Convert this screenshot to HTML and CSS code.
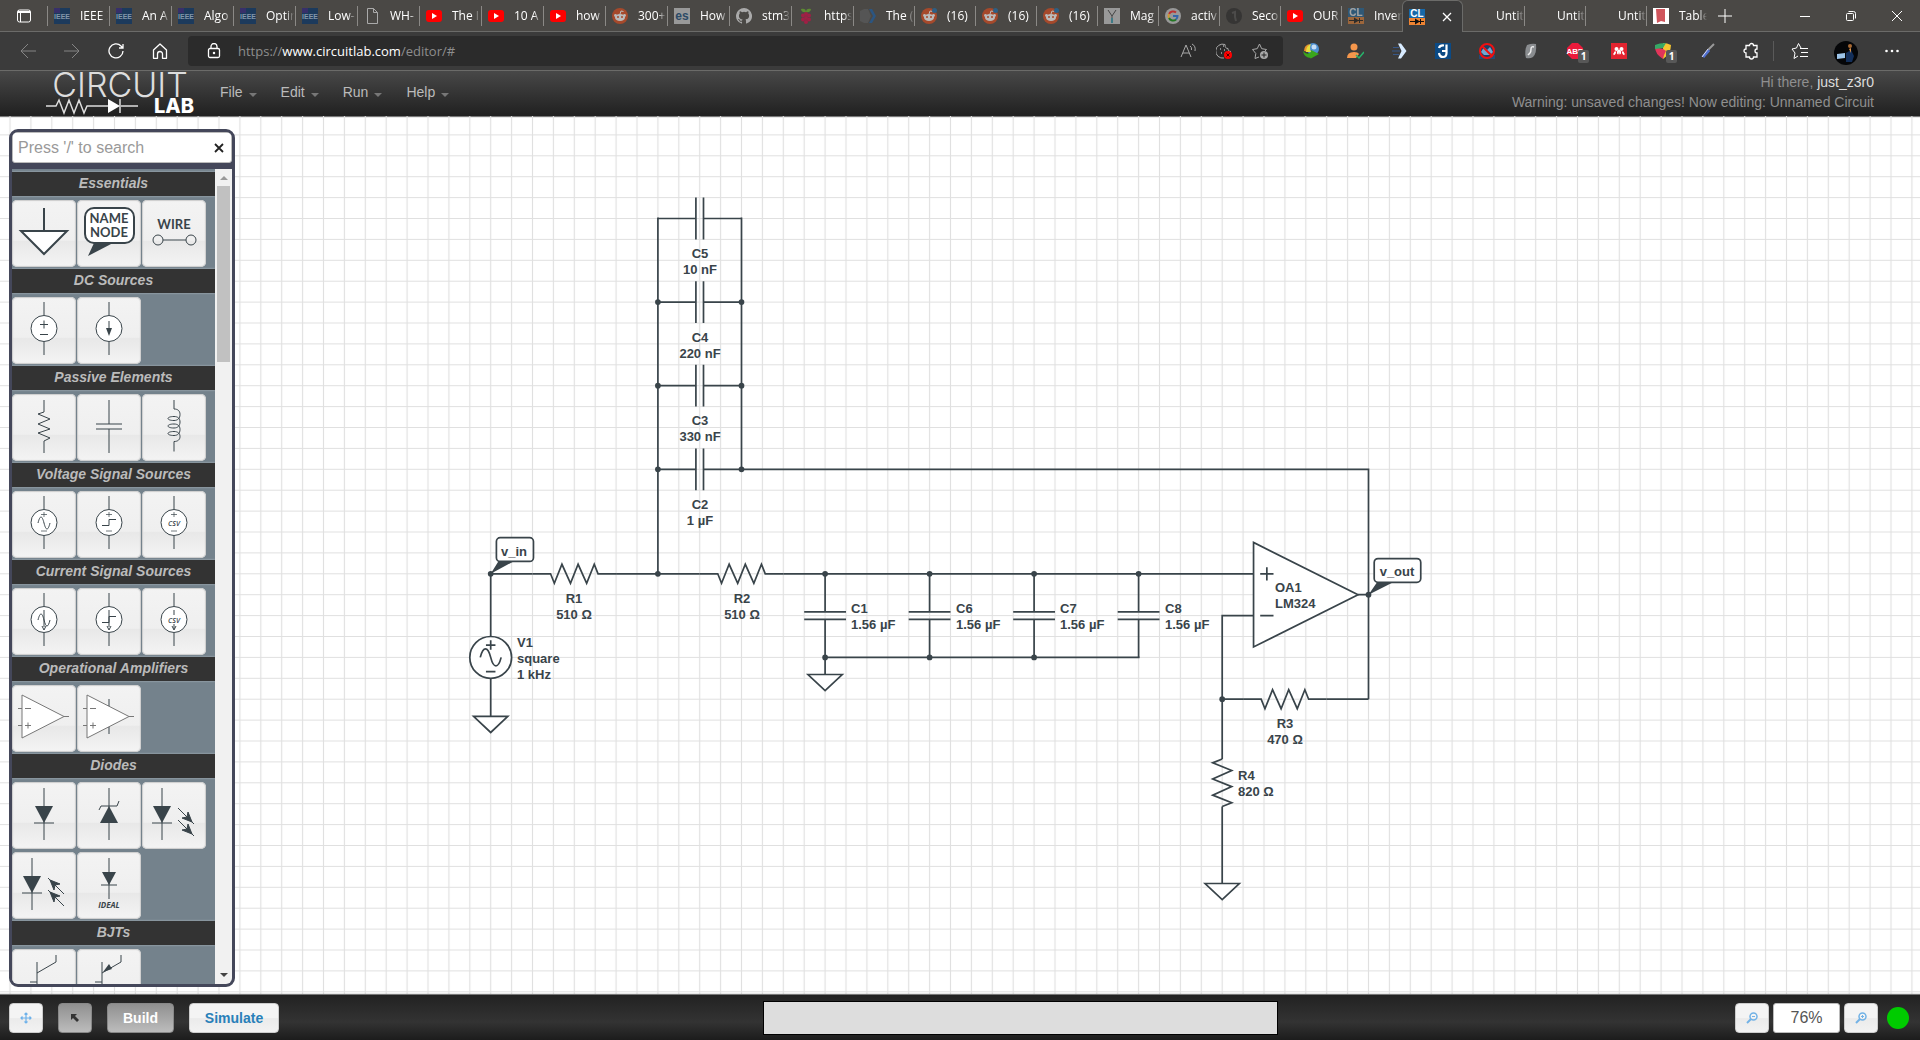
FILE: index.html
```html
<!DOCTYPE html>
<html lang="en">
<head>
<meta charset="utf-8">
<title>CircuitLab Editor</title>
<link rel="stylesheet" href="styles.css">
</head>
<body>
<svg class="defs" aria-hidden="true">
  <defs>
    <symbol id="f-ieee" viewBox="0 0 16 16"><path fill="#1c3a5c" d="M0 0h16v16H0z"/><path fill="#37306a" d="M0 0h6v5H0z"/><text x="8" y="11" class="fav-ieee">IEEE</text></symbol>
    <symbol id="f-page" viewBox="0 0 16 16"><path d="M3.500.5h6l4 4v11h-10zM9.500.5v4h4" fill="none" stroke="#aaa"/></symbol>
    <symbol id="f-yt" viewBox="0 0 16 16"><rect y="2" width="16" height="12" rx="3" fill="#f00"/><path d="M6 5l5 3-5 3z" fill="#fff"/></symbol>
    <symbol id="f-reddit" viewBox="0 0 16 16"><circle cx="8" cy="8" r="8" fill="#a6492b"/><ellipse cx="8" cy="9.500" rx="5" ry="3.600" fill="#bbb"/><circle cx="3.500" cy="7.500" r="1.400" fill="#bbb"/><circle cx="12.500" cy="7.500" r="1.400" fill="#bbb"/><path d="M8 6l1-3 2.500.5" stroke="#bbb" fill="none"/><circle cx="6" cy="9" r="1" fill="#a6492b"/><circle cx="10" cy="9" r="1" fill="#a6492b"/></symbol>
    <symbol id="f-reddit-n" viewBox="0 0 16 16"><use href="#f-reddit"/><circle cx="13.500" cy="2.500" r="2.500" fill="#2d5f85"/></symbol>
    <symbol id="f-es" viewBox="0 0 16 16"><path fill="#999" d="M0 0h16v16H0z"/><text x="8" y="12" class="fav-es">es</text></symbol>
    <symbol id="f-gh" viewBox="0 0 16 16"><path fill="#aaa" fill-rule="evenodd" d="M8 0a8 8 0 0 0-2.530 15.590c.4.070.55-.17.55-.38v-1.490c-2.010.37-2.530-.49-2.690-.94-.09-.23-.48-.94-.82-1.130-.28-.15-.68-.52-.01-.53.63-.01 1.080.58 1.230.82.72 1.210 1.870.87 2.330.66.07-.52.28-.87.51-1.070-1.780-.2-3.640-.89-3.640-3.950 0-.87.31-1.590.82-2.150-.08-.2-.36-1.020.08-2.120 0 0 .67-.21 2.200.82a7.500 7.500 0 0 1 4 0c1.530-1.040 2.200-.82 2.200-.82.44 1.100.16 1.920.08 2.120.51.56.82 1.270.82 2.150 0 3.070-1.870 3.750-3.650 3.950.29.25.54.73.54 1.480v2.200c0 .21.15.46.55.38A8 8 0 0 0 8 0z"/></symbol>
    <symbol id="f-pi" viewBox="0 0 16 16"><path d="M3 1c3-1 5 0 5 3-3 1-5-1-5-3zM13 1c-3-1-5 0-5 3 3 1 5-1 5-3z" fill="#5d8a33"/><g fill="#a01f45"><circle cx="8" cy="6" r="2"/><circle cx="5" cy="7.500" r="2"/><circle cx="11" cy="7.500" r="2"/><circle cx="8" cy="10" r="2"/><circle cx="5" cy="11.500" r="2"/><circle cx="11" cy="11.500" r="2"/><circle cx="8" cy="14" r="2"/></g></symbol>
    <symbol id="f-hex" viewBox="0 0 16 16"><path d="M0 3l4-2h4l3 7-3 7H4l-4-2z" fill="#555"/><path d="M9 1h3l4 7-4 7H9l4-7z" fill="#2c5580"/></symbol>
    <symbol id="f-y" viewBox="0 0 16 16"><path fill="#999" d="M0 0h16v16H0z"/><path d="M4 2l4 6 4-6M8 8v2" stroke="#444" fill="none"/><path d="M8 10v5" stroke="#3e7a86" stroke-width="2"/></symbol>
    <symbol id="f-g" viewBox="0 0 16 16"><circle cx="8" cy="8" r="8" fill="#999"/><g fill="none" stroke-width="2"><path d="M4 6a4.500 4.500 0 0 1 7-1.500" stroke="#b33"/><path d="M4 6a4.500 4.500 0 0 0 0 4" stroke="#c93"/><path d="M4 10a4.500 4.500 0 0 0 7 1.500" stroke="#272"/><path d="M11 11.500c1-.8 1.500-2 1.500-3.500H8" stroke="#36a"/></g></symbol>
    <symbol id="f-dark" viewBox="0 0 16 16"><circle cx="8" cy="8" r="8" fill="#363534"/><path d="M6 5l3-1v5l1 4" stroke="#4c4b4a" fill="none" stroke-width="2"/></symbol>
    <symbol id="f-cl" viewBox="0 0 16 16"><path fill="#1668a8" d="M0 0h16v9H0z"/><path fill="#ef8432" d="M0 9h16v7H0z"/><text x="8" y="8" class="fav-cl">CL</text><path d="M1 12.500h14M11.500 10v5" stroke="#111"/><path d="M6 9.500l5 3-5 3z" fill="#111"/></symbol>
    <symbol id="f-table" viewBox="0 0 16 16"><path fill="#fff" d="M0 0h16v16H0z"/><path d="M3 1h9v13l-4-1-4 2z" fill="#d0555c"/></symbol>

    <pattern id="grid" width="22" height="22" x="-11" y="-11" patternUnits="userSpaceOnUse"><path d="M11 0v22M0 11h22" stroke="#e0e0e0" stroke-width="1.200"/></pattern>
    <g id="res"><path d="M-44 0h19l4 10 8-20 9 20 8-20 9 20 8-20 4 10h19"/></g>
    <g id="cap"><path d="M-44 0h40M-4-22v44M4-22v44M4 0h40"/></g>
    <g id="gnd"><path d="M-18 0h36L0 17z" fill="#fff"/></g>
    <g id="src"><path d="M32 5v13M32 45v13"/><circle cx="32" cy="31.500" r="13" fill="#fff"/></g>
    <g id="pol"><path d="M29 23.500h6M32 21v5M29 40h6" opacity=".7"/></g>
    <g id="diode"><path d="M0 6v52M-10 41h20"/><path d="M-9 24H9L0 41z" fill="#39444a" stroke="none"/></g>
    <g id="ray"><path d="M0 0l16 16"/><path d="M14 14L4 10l5-1 1-5z" fill="#39444a"/></g>
  </defs>
</svg>

<nav class="tabs" aria-label="Tabs">
  <button class="tab-menu" aria-label="Tab actions"><svg width="14" height="14" viewBox="0 0 14 14"><rect x=".5" y="1" width="13" height="12" rx="2" fill="none" stroke="#fff"/><path d="M1 2h12v2H1z" fill="#fff"/><path d="M3.500 4v9" stroke="#fff"/></svg></button>
  <div class="tab-list">
    <button class="tab"><svg><use href="#f-ieee"/></svg><span>IEEE X</span></button>
    <button class="tab"><svg><use href="#f-ieee"/></svg><span>An A</span></button>
    <button class="tab"><svg><use href="#f-ieee"/></svg><span>Algo</span></button>
    <button class="tab"><svg><use href="#f-ieee"/></svg><span>Optir</span></button>
    <button class="tab"><svg><use href="#f-ieee"/></svg><span>Low-</span></button>
    <button class="tab"><svg><use href="#f-page"/></svg><span>WH-</span></button>
    <button class="tab"><svg><use href="#f-yt"/></svg><span>The I</span></button>
    <button class="tab"><svg><use href="#f-yt"/></svg><span>10 A</span></button>
    <button class="tab"><svg><use href="#f-yt"/></svg><span>how</span></button>
    <button class="tab"><svg><use href="#f-reddit"/></svg><span>300+</span></button>
    <button class="tab"><svg><use href="#f-es"/></svg><span>How</span></button>
    <button class="tab"><svg><use href="#f-gh"/></svg><span>stm3</span></button>
    <button class="tab"><svg><use href="#f-pi"/></svg><span>https</span></button>
    <button class="tab"><svg><use href="#f-hex"/></svg><span>The (</span></button>
    <button class="tab"><svg><use href="#f-reddit-n"/></svg><span>(16)</span></button>
    <button class="tab"><svg><use href="#f-reddit-n"/></svg><span>(16)</span></button>
    <button class="tab"><svg><use href="#f-reddit-n"/></svg><span>(16)</span></button>
    <button class="tab"><svg><use href="#f-y"/></svg><span>Mag</span></button>
    <button class="tab"><svg><use href="#f-g"/></svg><span>activ</span></button>
    <button class="tab"><svg><use href="#f-dark"/></svg><span>Seco</span></button>
    <button class="tab"><svg><use href="#f-yt"/></svg><span>OUR</span></button>
    <button class="tab dim"><svg><use href="#f-cl"/></svg><span>Inver</span></button>
    <button class="tab active" aria-label="CircuitLab"><svg><use href="#f-cl"/></svg><svg class="tab-x" viewBox="0 0 16 16"><path d="M4 4l8 8M12 4l-8 8" stroke="#fff" stroke-width="1.300"/></svg></button>
    <button class="tab"><svg></svg><span>Untit</span></button>
    <button class="tab"><svg></svg><span>Untit</span></button>
    <button class="tab"><svg></svg><span>Untit</span></button>
    <button class="tab"><svg><use href="#f-table"/></svg><span>Table</span></button>
  </div>
  <button class="new-tab" aria-label="New tab"><svg width="16" height="16" viewBox="0 0 16 16"><path d="M1 8h14M8 1v14" stroke="#fff"/></svg></button>
  <div class="win-buttons">
    <button aria-label="Minimize"><svg width="12" height="12" viewBox="0 0 12 12"><path d="M1 6.500h10" stroke="#fff"/></svg></button>
    <button aria-label="Restore"><svg width="12" height="12" viewBox="0 0 12 12" fill="none" stroke="#fff"><rect x="1.500" y="3.500" width="7" height="7" rx="1"/><path d="M3.500 1.500h5q2 0 2 2v5"/></svg></button>
    <button aria-label="Close"><svg width="12" height="12" viewBox="0 0 12 12"><path d="M1 1l10 10M11 1L1 11" stroke="#fff"/></svg></button>
  </div>
</nav>

<div class="toolbar">
  <div class="nav-buttons">
    <button aria-label="Back"><svg width="16" height="16" viewBox="0 0 16 16" fill="none" stroke="#858585"><path d="M16 8H1M8 1L1 8l7 7"/></svg></button>
    <button aria-label="Forward"><svg width="16" height="16" viewBox="0 0 16 16" fill="none" stroke="#858585"><path d="M0 8h15M8 1l7 7-7 7"/></svg></button>
    <button aria-label="Reload"><svg width="16" height="16" viewBox="0 0 16 16" fill="none" stroke="#fff" stroke-width="1.300"><path d="M15 8a7 7 0 1 1-2-5l2 2M15 1v4h-4"/></svg></button>
    <button aria-label="Home"><svg width="16" height="16" viewBox="0 0 16 16" fill="none" stroke="#fff" stroke-width="1.300"><path d="M1.500 7L8 1l6.500 6v8.300h-4V11a2.500 2.500 0 0 0-5 0v4.300h-4z" stroke-linejoin="round"/></svg></button>
  </div>
  <div class="address">
    <svg width="16" height="16" viewBox="0 0 16 16" fill="none" stroke="#fff" stroke-width="1.300"><rect x="2.500" y="5.500" width="11" height="9" rx="1.500"/><path d="M5 5V3.500a3 3 0 0 1 6 0V5"/><circle cx="8" cy="10" r=".6" fill="#fff"/></svg>
    <a class="url" href="#">https://<b>www.circuitlab.com</b>/editor/#</a>
    <div class="address-icons">
      <svg width="16" height="16" viewBox="0 0 16 16" fill="none" stroke="#aaa"><path d="M1 14L6 2l5 12M3 10h6"/><path d="M10 3q2 1 1.500 4M12 1q4 2 3 7"/></svg>
      <svg width="16" height="16" viewBox="0 0 16 16" fill="none" stroke="#aaa"><path d="M8 15A7 7 0 1 1 9 1.500c0 3 1 4 3 4 0 2 1 3 3 3"/><path d="M4 6h1M8 7h1M5 10h1M7 3h1" stroke-width="1.500"/><circle cx="12" cy="12" r="4" fill="#f00" stroke="none"/><path d="M10.500 10.500l3 3M13.500 10.500l-3 3" stroke="#400"/></svg>
      <svg width="16" height="16" viewBox="0 0 16 16" fill="none" stroke="#aaa"><path d="M7 14l-4 1.500.8-5L.5 6.500l4.700-.8L7.500 1l2.200 4.700 4.800.8-1.500 1.500"/><circle cx="12" cy="12" r="4" fill="#aaa" stroke="none"/><path d="M9.500 12h5M12 9.500v5" stroke="#222"/></svg>
    </div>
  </div>
  <div class="extensions">
    <button aria-label="Download manager"><svg viewBox="0 0 18 18"><circle cx="11" cy="7" r="6" fill="#4d8fd0"/><circle cx="12" cy="5" r="2.500" fill="#c7def5"/><path d="M2 9q0-6 6-7-3 3-2 8z" fill="#e8932c"/><path d="M4 10q0-6 5-8-2 4 0 8z" fill="#e6e03e"/><path d="M1 9q1 7 8 7l-1 1 9-5-8-4v2Q5 14 1 9z" fill="#3aa61c"/></svg></button>
    <button aria-label="Account check"><svg viewBox="0 0 18 18"><circle cx="8" cy="5" r="3.500" fill="#f5974c"/><path d="M1 16q0-6 7-6 4 0 5 2l-3 4z" fill="#f5974c"/><path d="M10 13l3 3 5-6" stroke="#27b36b" stroke-width="1.500" fill="none"/></svg></button>
    <button aria-label="Arrow tool"><svg viewBox="0 0 18 18"><path d="M8 1.500h3l5.500 7.500-5.500 7.500H8L11.500 9z" fill="#d8ebff"/><path d="M3 5.500h6M2 9h8M3 12.500h6" stroke="#37588a" fill="none"/></svg></button>
    <button aria-label="J tool"><svg viewBox="0 0 18 18"><path d="M1 1h16v16H1z" fill="#0b4a85"/><path d="M12.500 2.500v8.500q0 4-3.500 4t-4-4M8 9h4M5 6q1-3 5-2.500" stroke="#fff" stroke-width="2.200" fill="none"/></svg></button>
    <button aria-label="Blocker"><svg viewBox="0 0 18 18"><path d="M1 13h16v4H1z" fill="#234a73"/><circle cx="9" cy="9" r="7" fill="#1d3f66" stroke="#e11" stroke-width="2"/><path d="M3 10l3-5 3 3 3-3 3 5-3 3H6z" fill="#6fa8d2"/><path d="M4 4l10 10" stroke="#e11" stroke-width="2"/></svg></button>
    <button aria-label="S tool"><svg viewBox="0 0 18 18"><path d="M5 3q5-2 9-1 1 9-3 13-3 2-7 1-2-7 1-13z" fill="#8a8d90"/><path d="M12 5q-3-1-3 2t-1 4-2 2" stroke="#eee" stroke-width="1.500" fill="none"/></svg></button>
    <button class="with-badge" aria-label="Adblock Plus"><svg viewBox="0 0 18 18"><path d="M6 1h6l5 5v6l-5 5H6l-5-5V6z" fill="#ec1a3b"/><text x="9" y="12" class="abp">ABP</text></svg><span class="badge">1</span></button>
    <button aria-label="Mendeley"><svg viewBox="0 0 18 18"><path d="M1 1h16v16H1z" fill="#e32430"/><path d="M3.500 12.500q2-1 1.500-3M14.500 12.500q-2-1-1.500-3M7.500 12q1-1 0-3M10.500 12q-1-1 0-3" stroke="#fff" stroke-width="1.800" fill="none"/><circle cx="6.500" cy="7" r="2" fill="#fff"/><circle cx="11.500" cy="7" r="2" fill="#fff"/><circle cx="9" cy="9" r="1.500" fill="#fff"/></svg></button>
    <button class="with-badge" aria-label="Shield"><svg viewBox="0 0 18 18"><path d="M9 1q4 0 8 2 0 9-8 14V1z" fill="#f4c531"/><path d="M9 17Q1 12 1 5l8 2 3 2q-2 3-3 8z" fill="#e2355a"/><path d="M1 3q4-2 11-2L9 6 1 7z" fill="#36a866"/></svg><span class="badge">1</span></button>
    <button aria-label="Color picker"><svg viewBox="0 0 18 18"><path d="M16 2l-6 6" stroke="#999" stroke-width="2"/><path d="M11 8l-6 7" stroke="#4f6fd0" stroke-width="3"/><path d="M10 7l-6 8" stroke="#dde"/></svg></button>
    <button aria-label="Extensions"><svg viewBox="0 0 18 18" fill="none" stroke="#fff" stroke-width="1.300"><path d="M4 3.500h3.500a2 2 0 0 1 4 0H15V7a2 2 0 0 0 0 4v4h-3.500a2 2 0 0 1-4 0H4v-4a2 2 0 0 1 0-4z"/></svg></button>
  </div>
  <div class="profile">
    <button aria-label="Favorites"><svg viewBox="0 0 18 18" fill="none" stroke="#fff"><path d="M10 6L7.500 1.500 5.500 6 1 7l3 4-1 5.500 4-2.500M9 6.500h8M10 10.500h7M9 14.500h8"/></svg></button>
    <button aria-label="Profile"><svg class="avatar" viewBox="0 0 24 24"><circle cx="12" cy="12" r="12" fill="#050608"/><path d="M3 13l8-1v5l-8 1z" fill="#9cc4e8"/><path d="M12 12l5-3 3 6-2 6h-6z" fill="#132f5a"/><circle cx="16" cy="5" r="2" fill="#a86a33"/><path d="M15 8l2-1v5z" fill="#d8924a"/></svg></button>
    <button aria-label="Settings"><svg viewBox="0 0 18 18" fill="#fff"><circle cx="3.500" cy="9" r="1.300"/><circle cx="9" cy="9" r="1.300"/><circle cx="14.500" cy="9" r="1.300"/></svg></button>
  </div>
</div>

<header class="app-header">
  <a class="logo" href="#" aria-label="CircuitLab">
    <svg width="152" height="44" viewBox="0 0 152 44">
      <text x="76" y="26" class="logo-top">CIRCUIT</text>
      <path d="M2 35h10l3-6 5 13 5-13 5 13 5-13 5 13 3-7h21M77 35h17M76 28v14" fill="none" stroke="#ddd" stroke-width="1.500"/>
      <path d="M64 28l12 7-12 7z" fill="#fff"/>
      <text x="150" y="42" class="logo-lab">LAB</text>
    </svg>
  </a>
  <nav class="menu" aria-label="Main menu">
    <button>File</button><button>Edit</button><button>Run</button><button>Help</button>
  </nav>
  <div class="session">
    <div>Hi there, <a href="#">just_z3r0</a></div>
    <div>Warning: unsaved changes! Now editing: Unnamed Circuit</div>
  </div>
</header>

<main class="workspace">
  <svg class="canvas" role="img" aria-label="Circuit schematic">
    <g transform="translate(10 -2) scale(.95)">
      <rect x="-22" y="-22" width="110%" height="110%" fill="url(#grid)"/>
      <g fill="none" stroke="#39444a" stroke-width="1.800">
        <path d="M682 484V109M770 109v265M770 374h660v242M506 484v66M506 594v40"/>
        <use href="#cap" x="726" y="110"/><use href="#cap" x="726" y="198"/><use href="#cap" x="726" y="286"/><use href="#cap" x="726" y="374"/>
        <path d="M506 484h44M638 484h88M814 484h495"/>
        <use href="#res" x="594" y="484"/><use href="#res" x="770" y="484"/>
        <circle cx="506" cy="572" r="22" fill="#fff"/>
        <path d="M501 559h10M506 554v10M501 587h10M495 572c3-12 8-12 11 0s8 12 11 0"/>
        <use href="#gnd" x="506" y="634"/>
        <g id="shunt"><path d="M858 484v40M858 532v40M836 524h44M836 532h44"/></g>
        <use href="#shunt" x="110"/><use href="#shunt" x="220"/><use href="#shunt" x="330"/>
        <path d="M858 590v-18h331"/><use href="#gnd" x="858" y="590"/>
        <path d="M1309 451v110l110-55z" fill="#fff"/>
        <path d="M1419 506h11M1316 484h14M1323 477v14M1316 528h14M1309 528h-33v151M1276 616h22M1386 616h44M1276 729v81"/>
        <use href="#res" x="1342" y="616"/>
        <path d="M1276 679l-10 4 20 8-20 9 20 8-20 9 20 8-10 4"/>
        <use href="#gnd" x="1276" y="810"/>
        <rect x="512" y="446" width="39" height="25" rx="4" fill="#fff"/>
        <rect x="1436" y="468" width="49" height="25" rx="4" fill="#fff"/>
      </g>
      <g fill="#39444a">
        <path d="M506 484l8-13h16zM1430 506l9-13h17z"/>
        <circle cx="506" cy="484" r="3"/><circle cx="682" cy="484" r="3"/><circle cx="682" cy="198" r="3"/><circle cx="682" cy="286" r="3"/><circle cx="682" cy="374" r="3"/>
        <circle cx="770" cy="198" r="3"/><circle cx="770" cy="286" r="3"/><circle cx="770" cy="374" r="3"/>
        <circle cx="858" cy="484" r="3"/><circle cx="968" cy="484" r="3"/><circle cx="1078" cy="484" r="3"/><circle cx="1188" cy="484" r="3"/>
        <circle cx="858" cy="572" r="3"/><circle cx="968" cy="572" r="3"/><circle cx="1078" cy="572" r="3"/>
        <circle cx="1276" cy="616" r="3"/><circle cx="1430" cy="506" r="3"/>
      </g>
    </g>
    <g class="labels centered">
      <text x="700" y="142">C5</text><text x="700" y="158">10 nF</text>
      <text x="700" y="226">C4</text><text x="700" y="242">220 nF</text>
      <text x="700" y="309">C3</text><text x="700" y="325">330 nF</text>
      <text x="700" y="393">C2</text><text x="700" y="409">1 µF</text>
      <text x="574" y="487">R1</text><text x="574" y="503">510 Ω</text>
      <text x="742" y="487">R2</text><text x="742" y="503">510 Ω</text>
      <text x="1285" y="612">R3</text><text x="1285" y="628">470 Ω</text>
      <text x="514" y="440">v_in</text><text x="1397" y="460">v_out</text>
    </g>
    <g class="labels">
      <text x="517" y="531">V1</text><text x="517" y="547">square</text><text x="517" y="563">1 kHz</text>
      <text x="851" y="497">C1</text><text x="851" y="513">1.56 µF</text>
      <text x="956" y="497">C6</text><text x="956" y="513">1.56 µF</text>
      <text x="1060" y="497">C7</text><text x="1060" y="513">1.56 µF</text>
      <text x="1165" y="497">C8</text><text x="1165" y="513">1.56 µF</text>
      <text x="1275" y="476">OA1</text><text x="1275" y="492">LM324</text>
      <text x="1238" y="664">R4</text><text x="1238" y="680">820 Ω</text>
    </g>
  </svg>

  <aside class="palette">
    <div class="search"><input type="text" placeholder="Press '/' to search" aria-label="Search parts"><button aria-label="Clear search"><svg width="10" height="10" viewBox="0 0 10 10"><path d="M1 1l8 8M9 1L1 9" stroke="#222" stroke-width="1.800"/></svg></button></div>
    <div class="palette-body">
      <div class="parts">
        <h2>Essentials</h2>
        <div class="row">
          <button aria-label="Ground"><svg><path d="M32 8v23M9 31h46L32 54z" fill="#fff" stroke-width="2"/></svg></button>
          <button aria-label="Name node"><svg><rect x="8" y="8" width="49" height="35" rx="9" fill="#fff" stroke-width="2"/><path d="M17 43l-6 13 25-13z" fill="#39444a" stroke="none"/><text x="32" y="23" class="part-text">NAME</text><text x="32" y="37" class="part-text">NODE</text></svg></button>
          <button aria-label="Wire"><svg><text x="32" y="29" class="part-text">WIRE</text><path d="M21 40h23"/><circle cx="16" cy="40" r="5"/><circle cx="49" cy="40" r="5"/></svg></button>
        </div>
        <h2>DC Sources</h2>
        <div class="row">
          <button aria-label="Voltage source"><svg><use href="#src"/><path d="M28 27.500h8M32 23.500v8M28 37.500h8"/></svg></button>
          <button aria-label="Current source"><svg><use href="#src"/><path d="M32 24v10"/><path d="M29 31h6l-3 8z" fill="#39444a" stroke="none"/></svg></button>
        </div>
        <h2>Passive Elements</h2>
        <div class="row">
          <button aria-label="Resistor"><svg><path d="M32 6v12l-6 2 12 5-12 5 12 5-12 4 12 5-6 3v12"/></svg></button>
          <button aria-label="Capacitor"><svg><path d="M32 6v24M19 30h26M19 35h26M32 35v24"/></svg></button>
          <button aria-label="Inductor"><svg><path d="M32 6v9c4 0 6 2 6 5.500s-2 6-6 6c-4 0-6-1-6-2s2-2 6-2c4 0 6 2 6 5.500s-2 6-6 6c-4 0-6-1-6-2s2-2 6-2c4 0 6 2 6 5.500s-2 6-6 6c-4 0-6-1-6-2s2-2 6-2c4 0 6 2 6 5s-2 5-6 5v10"/></svg></button>
        </div>
        <h2>Voltage Signal Sources</h2>
        <div class="row">
          <button aria-label="Sine voltage"><svg><use href="#src"/><use href="#pol"/><path d="M26 32c2-8 4-8 6 0s4 8 6 0"/></svg></button>
          <button aria-label="Step voltage"><svg><use href="#src"/><use href="#pol"/><path d="M25 34.500h7v-6h7"/></svg></button>
          <button aria-label="CSV voltage"><svg><use href="#src"/><use href="#pol"/><text x="32" y="35" class="csv">CSV</text></svg></button>
        </div>
        <h2>Current Signal Sources</h2>
        <div class="row">
          <button aria-label="Sine current"><svg><use href="#src"/><path d="M26 32c2-8 4-8 6 0s4 8 6 0M32 22v17M30 38l2 4 2-4"/></svg></button>
          <button aria-label="Step current"><svg><use href="#src"/><path d="M25 34.500h7v-6h7M32 22v17M30 38l2 4 2-4"/></svg></button>
          <button aria-label="CSV current"><svg><use href="#src"/><text x="32" y="35" class="csv">CSV</text><path d="M32 22v5M32 36v5M30 38l2 4 2-4"/></svg></button>
        </div>
        <h2>Operational Amplifiers</h2>
        <div class="row">
          <button aria-label="Op-amp"><svg><g id="opamp" stroke="#777"><path d="M10 10v43l42-21.500z" fill="#fff"/><path d="M52 31.500h5M6 23.500h4M13 23.500h6M6 40.500h4M13 40.500h6M16 37.500v6"/></g></svg></button>
          <button aria-label="Op-amp with rails"><svg><use href="#opamp"/><path d="M32 14v7M32 42v7"/></svg></button>
        </div>
        <h2>Diodes</h2>
        <div class="row">
          <button aria-label="Diode"><svg><use href="#diode" x="32"/></svg></button>
          <button aria-label="Zener diode"><svg><path d="M32 6v52M22 28l2-4h16l2-5"/><path d="M23 41h18l-9-17z" fill="#39444a" stroke="none"/></svg></button>
          <button aria-label="LED"><svg><use href="#diode" x="20"/><use href="#ray" x="36" y="26"/><use href="#ray" x="36" y="38"/></svg></button>
          <button aria-label="Photodiode"><svg><use href="#diode" x="20"/><g transform="rotate(180 44 40)"><use href="#ray" x="36" y="26"/><use href="#ray" x="36" y="38"/></g></svg></button>
          <button aria-label="Ideal diode"><svg><path d="M32 6v41M24 33h16"/><path d="M25 20h14l-7 13z" fill="#39444a" stroke="none"/><text x="32" y="56" class="ideal">IDEAL</text></svg></button>
        </div>
        <h2>BJTs</h2>
        <div class="row">
          <button aria-label="NPN"><svg><path d="M18 33h7M25 13v40M25 24l19-11V6"/></svg></button>
          <button aria-label="PNP"><svg><path d="M18 33h7M25 13v40M25 24l19-11V6"/><path d="M26 23l6-8 3 5z" fill="#39444a" stroke="none"/></svg></button>
        </div>
      </div>
      <div class="scrollbar"><i class="up"></i><i class="thumb"></i><i class="down"></i></div>
    </div>
  </aside>
</main>

<footer class="bottom">
  <div class="modes">
    <button class="square" aria-label="Pan"><svg width="12" height="12" viewBox="0 0 12 12" fill="none" stroke="#6db1ea" stroke-width="1.200"><path d="M1 6h10M6 1v10M4.500 2.500L6 1l1.500 1.500M4.500 9.500L6 11l1.500-1.500M2.500 4.500L1 6l1.500 1.500M9.500 4.500L11 6 9.500 7.500"/></svg></button>
    <button class="square pressed" aria-label="Select"><svg width="10" height="10" viewBox="0 0 10 10"><path d="M1 1h6L5 3l4 4-2 2-4-4-2 2z" fill="#333"/></svg></button>
    <button class="pressed build">Build</button>
    <button class="simulate">Simulate</button>
  </div>
  <div class="status"></div>
  <div class="zoom">
    <button class="square" aria-label="Zoom out"><svg width="12" height="12" viewBox="0 0 12 12" fill="none" stroke="#72b2e6" stroke-width="1.500"><circle cx="7.500" cy="4.500" r="3.500"/><path d="M5 7l-4 4" stroke-width="2"/><path d="M6 4.500h3" stroke-width="1"/></svg></button>
    <input type="text" value="76%" aria-label="Zoom level">
    <button class="square" aria-label="Zoom in"><svg width="12" height="12" viewBox="0 0 12 12" fill="none" stroke="#72b2e6" stroke-width="1.500"><circle cx="7.500" cy="4.500" r="3.500"/><path d="M5 7l-4 4" stroke-width="2"/><path d="M6 4.500h3M7.500 3v3" stroke-width="1"/></svg></button>
    <span class="online"></span>
  </div>
</footer>
</body>
</html>
```
FILE: styles.css
```css
* { box-sizing: border-box; }
body {
  margin: 0;
  height: 100vh;
  display: flex;
  flex-direction: column;
  overflow: hidden;
  font-family: "Liberation Sans", Arial, sans-serif;
  font-size: 14px;
  background: #fff;
}
button { border: 0; padding: 0; margin: 0; background: none; font: inherit; color: inherit; }
svg { display: block; flex: none; }
.defs { position: absolute; width: 0; height: 0; }

/* Browser tabs */
.tabs {
  display: flex;
  height: 32px;
  flex: none;
  background: #4a4845;
  border-bottom: 1px solid #6b6b69;
  color: #fff;
  font-family: "Open Sans", "Noto Sans", sans-serif;
  font-size: 12px;
}
.tab-menu { width: 47px; display: grid; place-items: center; }
.tab-list { display: flex; }
.tab { position: relative; width: 61px; display: flex; align-items: center; gap: 10px; padding-left: 7px; overflow: hidden; }
.tab:nth-child(-n+13) { width: 62px; }
.tab::before { content: ""; position: absolute; left: 0; top: 6px; height: 20px; width: 1px; background: #8b8986; }
.tab svg { width: 16px; height: 16px; }
.tab span { width: 28px; overflow: hidden; white-space: nowrap; text-align: left; mask-image: linear-gradient(90deg, #000 70%, transparent); }
.tab.dim svg { opacity: .5; }
.tab.active { height: 32px; background: #3b3b3b; border: 1px solid #6b6b69; border-bottom: 0; border-radius: 6px 6px 0 0; gap: 14px; padding-left: 6px; }
.tab.active::before, .tab.active + .tab::before { display: none; }
.new-tab { width: 35px; display: grid; place-items: center; }
.win-buttons { display: flex; margin-left: auto; }
.win-buttons button { width: 46px; display: grid; place-items: center; }
.fav-ieee { font: 700 7px "Liberation Sans", sans-serif; fill: #8296aa; text-anchor: middle; }
.fav-es { font: 700 12px "Liberation Sans", sans-serif; fill: #2c4a66; text-anchor: middle; }
.fav-cl { font: 700 10px "Liberation Sans", sans-serif; fill: #fff; text-anchor: middle; }

/* Browser toolbar */
.toolbar { display: flex; align-items: center; height: 39px; flex: none; background: #3b3b3b; border-bottom: 1px solid #6b6b69; }
.nav-buttons { display: flex; width: 188px; padding-left: 6px; }
.nav-buttons button { width: 44px; height: 38px; display: grid; place-items: center; }
.address { flex: 1; height: 30px; display: flex; align-items: center; gap: 16px; padding: 0 15px 0 18px; background: #2b2b2b; border-radius: 4px; }
.url { flex: 1; color: #8e8e8e; text-decoration: none; font: 13px "Open Sans", "Noto Sans", sans-serif; }
.url b { font-weight: 400; color: #fff; }
.address-icons { display: flex; gap: 20px; }
.extensions { display: flex; padding-left: 6px; border-right: 1px solid #5a5a5a; }
.extensions button, .profile button { position: relative; width: 44px; height: 20px; display: grid; place-items: center; }
.extensions svg, .profile svg { width: 18px; height: 18px; }
.profile { display: flex; gap: 2px; padding: 0 6px 0 4px; }
.profile .avatar { width: 24px; height: 24px; }
.badge { position: absolute; left: 25px; top: 9px; width: 11px; height: 13px; border-radius: 2px; background: #585858; color: #fff; font: 700 10px/13px "Open Sans", sans-serif; text-align: center; }
.abp { font: 700 8px "Liberation Sans", sans-serif; fill: #fff; text-anchor: middle; }

/* Application header */
.app-header {
  display: flex;
  height: 45px;
  flex: none;
  padding: 0 46px 0 44px;
  background: linear-gradient(#484848, #202020);
  box-shadow: 0 1px 1px #777;
  position: relative;
  color: #8f8f8f;
}
.logo { width: 176px; }
.logo-top { font: 300 34px Inter, sans-serif; fill: #ddd; text-anchor: middle; }
.logo-lab { font: 800 20px Inter, sans-serif; fill: #fff; text-anchor: end; }
.menu { display: flex; gap: 24px; align-items: center; padding-bottom: 4px; color: #bbb; text-shadow: 0 1px 1px #000; }
.menu button::after { content: ""; display: inline-block; margin-left: 6px; border: 4px solid transparent; border-top-color: #777; border-bottom: 0; }
.session { margin-left: auto; text-align: right; line-height: 20px; padding-top: 1px; }
.session a { color: #ddd; text-decoration: none; }

/* Workspace */
.workspace { flex: 1; position: relative; min-height: 0; overflow: hidden; }
.canvas { width: 100%; height: 100%; }
.labels { font-weight: 700; font-size: 13px; fill: #39444a; }
.centered { text-anchor: middle; }

/* Parts palette */
.palette {
  position: absolute;
  left: 9px;
  top: 13px;
  bottom: 8px;
  width: 226px;
  display: flex;
  flex-direction: column;
  border: 3px solid #44475a;
  border-radius: 9px;
  background: #44475a;
  overflow: hidden;
}
.search { display: flex; height: 31px; flex: none; margin-bottom: 6px; background: #fff; border: 1px solid #bbb; border-radius: 3px; }
.search input { flex: 1; min-width: 0; border: 0; padding: 0 5px; background: none; font: 16px "Liberation Sans", Arial, sans-serif; outline: 0; }
.search input::placeholder { color: #999; }
.search button { width: 24px; display: grid; place-items: center; }
.palette-body { flex: 1; min-height: 0; display: flex; }
.parts { width: 203px; background: #74828c; padding-top: 3px; overflow: hidden; }
.parts h2 { margin: 0; height: 24px; background: #333; color: #bbb; font: italic 700 14px/22px "Liberation Sans", Arial, sans-serif; text-align: center; box-shadow: 0 0 2px #b4bec4; }
.row { display: flex; flex-wrap: wrap; gap: 3px 1px; padding: 4px 0 2px; }
.row button { width: 64px; height: 67px; border-radius: 5px; background: linear-gradient(#f3f3f3, #efefef 60%, #e8e8e8 62%, #f4f4f4); box-shadow: inset 0 0 1px 1px #ccc; }
.row svg { width: 64px; height: 67px; fill: none; stroke: #39444a; }
.row text { stroke: none; fill: #39444a; text-anchor: middle; }
.part-text { font: 700 13px Lato, sans-serif; }
.csv { font: italic 600 7px "Open Sans", sans-serif; }
.ideal { font: italic 700 8px "Open Sans", sans-serif; }
.scrollbar { flex: 1; background: #f1f1f1; display: flex; flex-direction: column; align-items: center; padding: 7px 0; }
.up, .down { border: 4px solid transparent; }
.up { border-bottom-color: #999; border-top: 0; }
.down { border-top-color: #444; border-bottom: 0; margin-top: auto; }
.thumb { width: 13px; height: 176px; margin-top: 6px; background: #c1c1c1; }

/* Bottom bar */
.bottom {
  display: grid;
  grid-template-columns: 763fr 515fr 642fr;
  align-items: center;
  height: 45px;
  flex: none;
  background: linear-gradient(#222, #333 60%, #1c1c1c);
  box-shadow: 0 -1px 1px #777;
  position: relative;
}
.modes { display: flex; gap: 15px; padding-left: 9px; }
.bottom button { height: 30px; border-radius: 4px; display: grid; place-items: center; background: linear-gradient(#f4f4f4 50%, #ebebeb 52%, #f2f2f2); border: 1px solid #ccc; font-weight: 700; }
.bottom .square { width: 34px; }
.bottom .pressed { background: linear-gradient(#909090, #bcbcbc); border-color: #888; color: #fff; }
.bottom .build { width: 67px; }
.bottom .simulate { width: 90px; color: #2980b9; }
.status { height: 34px; background: #ddd; border: 1px solid #000; }
.zoom { display: flex; justify-content: flex-end; align-items: center; gap: 4px; padding-right: 11px; }
.zoom input { width: 67px; height: 30px; border: 1px solid #bbb; border-radius: 3px; background: #fff; color: #555; font: 16px "Liberation Sans", Arial, sans-serif; text-align: center; }
.online { width: 22px; height: 22px; margin-left: 5px; border-radius: 50%; background: #0c0; }
```
